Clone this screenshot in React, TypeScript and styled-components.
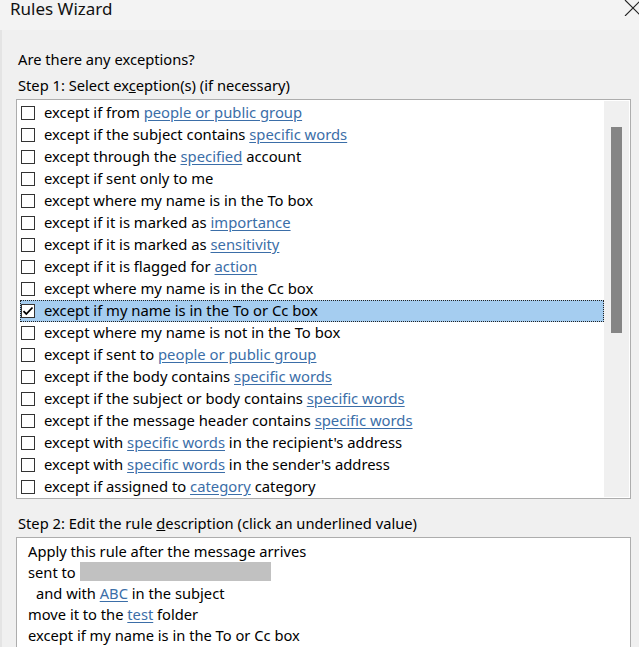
import React from "react";
import styled, { createGlobalStyle } from "styled-components";

const Global = createGlobalStyle`
  html, body { margin: 0; padding: 0; background: #f0f0f0; }
  body { font-family: "Noto Sans", "Open Sans", sans-serif; color: #000; overflow: hidden; }
  * { box-sizing: border-box; }
`;

const Window = styled.div`
  width: 639px;
  height: 647px;
  overflow: hidden;
  background: #f0f0f0;
  display: flex;
  flex-direction: column;
`;

const TitleBar = styled.div`
  height: 30px;
  flex: none;
  background: #f3f3f3;
  display: flex;
  justify-content: space-between;
  align-items: flex-start;
  padding-left: 10px;
  margin-right: -2px;
`;

const Title = styled.div`
  font-size: 17px;
  line-height: 18px;
  color: #111;
`;

const Body = styled.div`
  flex: 1;
  padding: 19px 8px 0 16px;
  border-left: 2px solid #e4e4e4;
  display: flex;
  flex-direction: column;
`;

const Label = styled.div<{ $gap: number; $top?: number }>`
  font-size: 14.7px;
  line-height: 20px;
  margin-top: ${(p) => p.$top ?? 0}px;
  margin-bottom: ${(p) => p.$gap}px;
  white-space: nowrap;
`;

const ListBox = styled.div`
  width: 615px;
  height: 400px;
  flex: none;
  background: #fff;
  border: 1px solid #adadad;
  margin-left: -2px;
  padding: 1px;
  display: flex;
`;

const Rows = styled.div`
  flex: 1;
  padding: 1px 0 0 2px;
  display: flex;
  flex-direction: column;
  overflow: hidden;
`;

const Row = styled.div<{ $selected?: boolean }>`
  height: 22px;
  flex: none;
  display: flex;
  align-items: center;
  gap: 9px;
  padding-left: 1px;
  font-size: 14.8px;
  line-height: 20px;
  white-space: nowrap;
  background: ${(p) => (p.$selected ? "#a5cdf0" : "transparent")};
  outline: ${(p) => (p.$selected ? "1px dotted #222" : "none")};
  outline-offset: -1px;
`;

const RowText = styled.span`
  margin-top: -2px;
`;

const Box = styled.span`
  width: 14px;
  height: 14px;
  flex: none;
  border: 1px solid #333;
  background: #fff;
  display: flex;
  align-items: center;
  justify-content: center;
`;

const Link = styled.span`
  color: #3b6ea8;
  text-decoration: underline;
  text-underline-offset: 2px;
`;

const Scrollbar = styled.div`
  width: 25px;
  flex: none;
  background: #f0f0f0;
  display: flex;
  flex-direction: column;
  align-items: center;
  padding-top: 26px;
`;

const Thumb = styled.div`
  width: 11px;
  height: 206px;
  background: #858585;
`;

const DescBox = styled.div`
  width: 615px;
  height: 140px;
  flex: none;
  background: #fff;
  border: 1px solid #adadad;
  margin-left: -2px;
  padding: 3px 0 0 11px;
  font-size: 14.7px;
  line-height: 21px;
`;

const DescLine = styled.div<{ $indent?: number }>`
  padding-left: ${(p) => p.$indent ?? 0}px;
  display: flex;
  align-items: flex-start;
  white-space: pre;
`;

const Redacted = styled.span`
  width: 191px;
  height: 19px;
  background: #c1c1c1;
  margin-left: 4px;
`;

type Part = string | { link: string };
const rows: Part[][] = [
  ["except if from ", { link: "people or public group" }],
  ["except if the subject contains ", { link: "specific words" }],
  ["except through the ", { link: "specified" }, " account"],
  ["except if sent only to me"],
  ["except where my name is in the To box"],
  ["except if it is marked as ", { link: "importance" }],
  ["except if it is marked as ", { link: "sensitivity" }],
  ["except if it is flagged for ", { link: "action" }],
  ["except where my name is in the Cc box"],
  ["except if my name is in the To or Cc box"],
  ["except where my name is not in the To box"],
  ["except if sent to ", { link: "people or public group" }],
  ["except if the body contains ", { link: "specific words" }],
  ["except if the subject or body contains ", { link: "specific words" }],
  ["except if the message header contains ", { link: "specific words" }],
  ["except with ", { link: "specific words" }, " in the recipient's address"],
  ["except with ", { link: "specific words" }, " in the sender's address"],
  ["except if assigned to ", { link: "category" }, " category"],
];

const render = (parts: Part[]) =>
  parts.map((p, i) =>
    typeof p === "string" ? <span key={i} style={{ whiteSpace: "pre" }}>{p}</span> : <Link key={i}>{p.link}</Link>
  );

const Check = () => (
  <svg width="12" height="12" viewBox="0 0 12 12">
    <path d="M1.5 6.2 L4.3 9 L10.5 2.5" fill="none" stroke="#000" strokeWidth="1.8" />
  </svg>
);

export default function App() {
  return (
    <Window>
      <Global />
      <TitleBar>
        <Title>Rules Wizard</Title>
        <svg width="17" height="16" viewBox="0 0 17 16">
          <path d="M1 0 L17 16 M17 0 L1 16" stroke="#222" strokeWidth="1.1" />
        </svg>
      </TitleBar>
      <Body>
        <Label $gap={6}>Are there any exceptions?</Label>
        <Label $gap={4}>
          Step 1: Select ex<u>c</u>eption(s) (if necessary)
        </Label>
        <ListBox>
          <Rows>
            {rows.map((r, i) => (
              <Row key={i} $selected={i === 9}>
                <Box>{i === 9 && <Check />}</Box>
                <RowText>{render(r)}</RowText>
              </Row>
            ))}
          </Rows>
          <Scrollbar>
            <Thumb />
          </Scrollbar>
        </ListBox>
        <Label $gap={4} $top={14}>
          Step 2: Edit the rule <u>d</u>escription (click an underlined value)
        </Label>
        <DescBox>
          <DescLine>Apply this rule after the message arrives</DescLine>
          <DescLine>
            sent to<Redacted />
          </DescLine>
          <DescLine $indent={8}>
            and with <Link>ABC</Link> in the subject
          </DescLine>
          <DescLine>
            move it to the <Link>test</Link> folder
          </DescLine>
          <DescLine>except if my name is in the To or Cc box</DescLine>
        </DescBox>
      </Body>
    </Window>
  );
}
